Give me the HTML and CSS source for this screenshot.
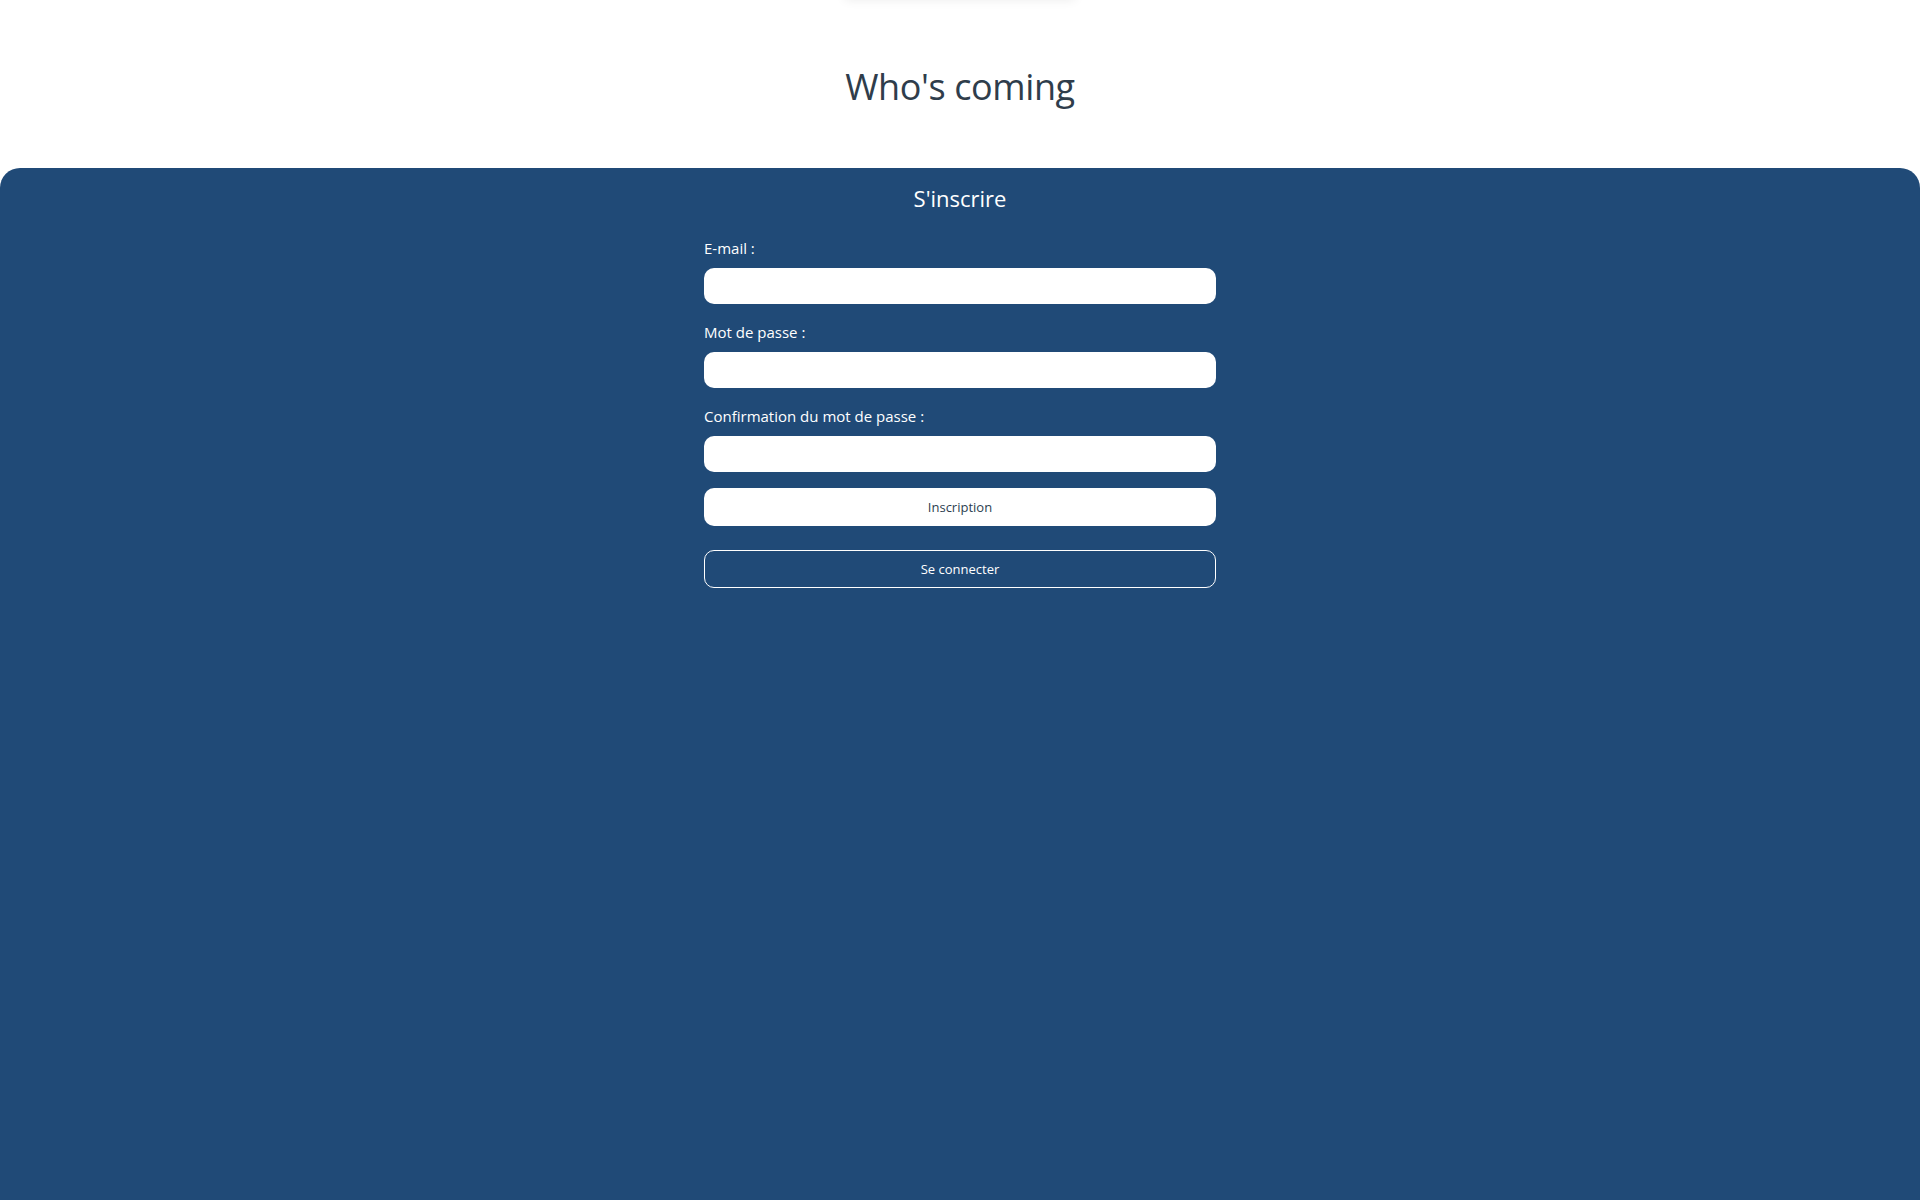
FILE: index.html
```html
<!DOCTYPE html>
<html lang="fr">
<head>
<meta charset="utf-8">
<title>Who's coming</title>
<link rel="stylesheet" href="styles.css">
</head>
<body>
<div class="topbar"></div>
<header class="header">
  <h1 class="title">Who's coming</h1>
</header>
<main class="panel">
  <h2 class="panel-title">S'inscrire</h2>
  <form class="form">
    <label class="label" for="email">E-mail :</label>
    <input class="input" id="email" type="email">
    <label class="label" for="pwd">Mot de passe :</label>
    <input class="input" id="pwd" type="password">
    <label class="label" for="pwd2">Confirmation du mot de passe :</label>
    <input class="input" id="pwd2" type="password">
    <button class="btn btn-primary" type="button">Inscription</button>
    <button class="btn btn-outline" type="button">Se connecter</button>
  </form>
</main>
</body>
</html>
```
FILE: styles.css
```css
* { box-sizing: border-box; }
html, body { margin: 0; padding: 0; }
body {
  font-family: "Open Sans", "Noto Sans", sans-serif;
  background: #ffffff;
  color: #2c3e50;
  overflow: hidden;
}
.topbar {
  width: 230px;
  height: 40px;
  margin: -40px auto 0;
  background: #fff;
  box-shadow: 0 0 10px rgba(0, 0, 0, 0.08);
}
.header {
  height: 168px;
  padding-top: 6px;
  display: flex;
  align-items: center;
  justify-content: center;
}
.title {
  margin: 0;
  font-size: 36px;
  font-weight: 400;
  line-height: 52px;
  color: #2f3d4b;
  letter-spacing: -0.4px;
}
.panel {
  background: #204a77;
  border-radius: 20px 20px 0 0;
  min-height: 1032px;
  padding-top: 14px;
  display: flex;
  flex-direction: column;
  align-items: center;
}
.panel-title {
  margin: 0 0 22px;
  font-size: 22px;
  font-weight: 400;
  line-height: 32px;
  color: #fff;
}
.form {
  width: 512px;
  display: flex;
  flex-direction: column;
}
.label {
  font-size: 15px;
  line-height: 24px;
  color: #fff;
  margin-bottom: 8px;
}
.input {
  height: 36px;
  border: none;
  border-radius: 10px;
  background: #fff;
  margin: 0 0 16px;
  padding: 0 12px;
  font: inherit;
}
.btn {
  height: 38px;
  border-radius: 10px;
  font-family: inherit;
  font-size: 13px;
  cursor: pointer;
}
.btn-primary {
  background: #fff;
  border: none;
  color: #2c3e50;
  margin-bottom: 24px;
}
.btn-outline {
  background: transparent;
  border: 1px solid #fff;
  color: #fff;
}
```
